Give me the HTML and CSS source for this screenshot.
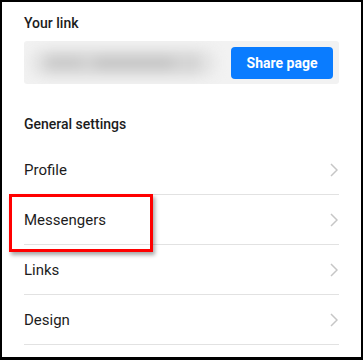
FILE: index.html
```html
<!DOCTYPE html>
<html>
<head>
<meta charset="utf-8">
<link rel="stylesheet" href="styles.css">
</head>
<body>
<div class="frame">
  <div class="label">Your link</div>
  <div class="link-box">
    <div class="blurred"><span class="blob b1"></span><span class="blob b2"></span><span class="blob b3"></span><span class="blob b4"></span></div>
    <button class="share">Share page</button>
  </div>
  <div class="label section">General settings</div>
  <ul class="menu">
    <li class="row"><span>Profile</span><svg class="chev" viewBox="0 0 8 14"><path d="M1 1l6 6-6 6"/></svg></li>
    <li class="row"><span>Messengers</span><svg class="chev" viewBox="0 0 8 14"><path d="M1 1l6 6-6 6"/></svg></li>
    <li class="row"><span>Links</span><svg class="chev" viewBox="0 0 8 14"><path d="M1 1l6 6-6 6"/></svg></li>
    <li class="row"><span>Design</span><svg class="chev" viewBox="0 0 8 14"><path d="M1 1l6 6-6 6"/></svg></li>
  </ul>
  <div class="highlight"></div>
</div>
</body>
</html>
```

FILE: styles.css
```css
html, body {
  margin: 0;
  padding: 0;
  background: #fff;
}
.frame {
  position: relative;
  box-sizing: border-box;
  width: 363px;
  height: 360px;
  border: 2px solid #000;
  border-bottom-width: 3px;
  padding: 11px 22px 0 22px;
  font-family: Roboto, "Liberation Sans", sans-serif;
  color: #1c1c1c;
  overflow: hidden;
}
.label {
  font-size: 14px;
  line-height: 20px;
  font-weight: 500;
}
.link-box {
  margin-top: 8px;
  height: 43px;
  background: #f2f2f2;
  border-radius: 3px;
  display: flex;
  align-items: center;
  justify-content: space-between;
  padding-right: 6px;
  overflow: hidden;
}
.blurred {
  position: relative;
  width: 200px;
  height: 43px;
  filter: blur(6px);
}
.blob {
  position: absolute;
  border-radius: 16px;
}
.b1 { left: 6px; top: 7px; width: 186px; height: 30px; background: #e4e4e4; }
.b2 { left: 18px; top: 12px; width: 160px; height: 20px; background: #d4d4d4; }
.b3 { left: 70px; top: 15px; width: 80px; height: 14px; background: #c8c8c8; }
.b4 { left: 24px; top: 16px; width: 34px; height: 11px; background: #cacaca; }
.share {
  width: 102px;
  height: 32px;
  border: none;
  border-radius: 4px;
  background: #0a7cff;
  color: #fff;
  font-family: Roboto, "Liberation Sans", sans-serif;
  font-size: 14px;
  font-weight: 700;
  padding: 0;
  margin-top: 1px;
}
.section {
  margin-top: 30px;
}
.menu {
  list-style: none;
  margin: 11px 0 0 0;
  padding: 0;
}
.row {
  height: 49px;
  border-bottom: 1px solid #e2e2e2;
  display: flex;
  align-items: center;
  justify-content: space-between;
  font-size: 15px;
}
.chev {
  width: 8px;
  height: 14px;
  fill: none;
  stroke: #c6c6c6;
  stroke-width: 1.5;
  margin-right: 1px;
}
.highlight {
  position: absolute;
  left: 7px;
  top: 192px;
  width: 138px;
  height: 52px;
  border: 3px solid #ff0000;
  box-shadow: 2px 3px 4px rgba(0,0,0,0.35);
}
```
